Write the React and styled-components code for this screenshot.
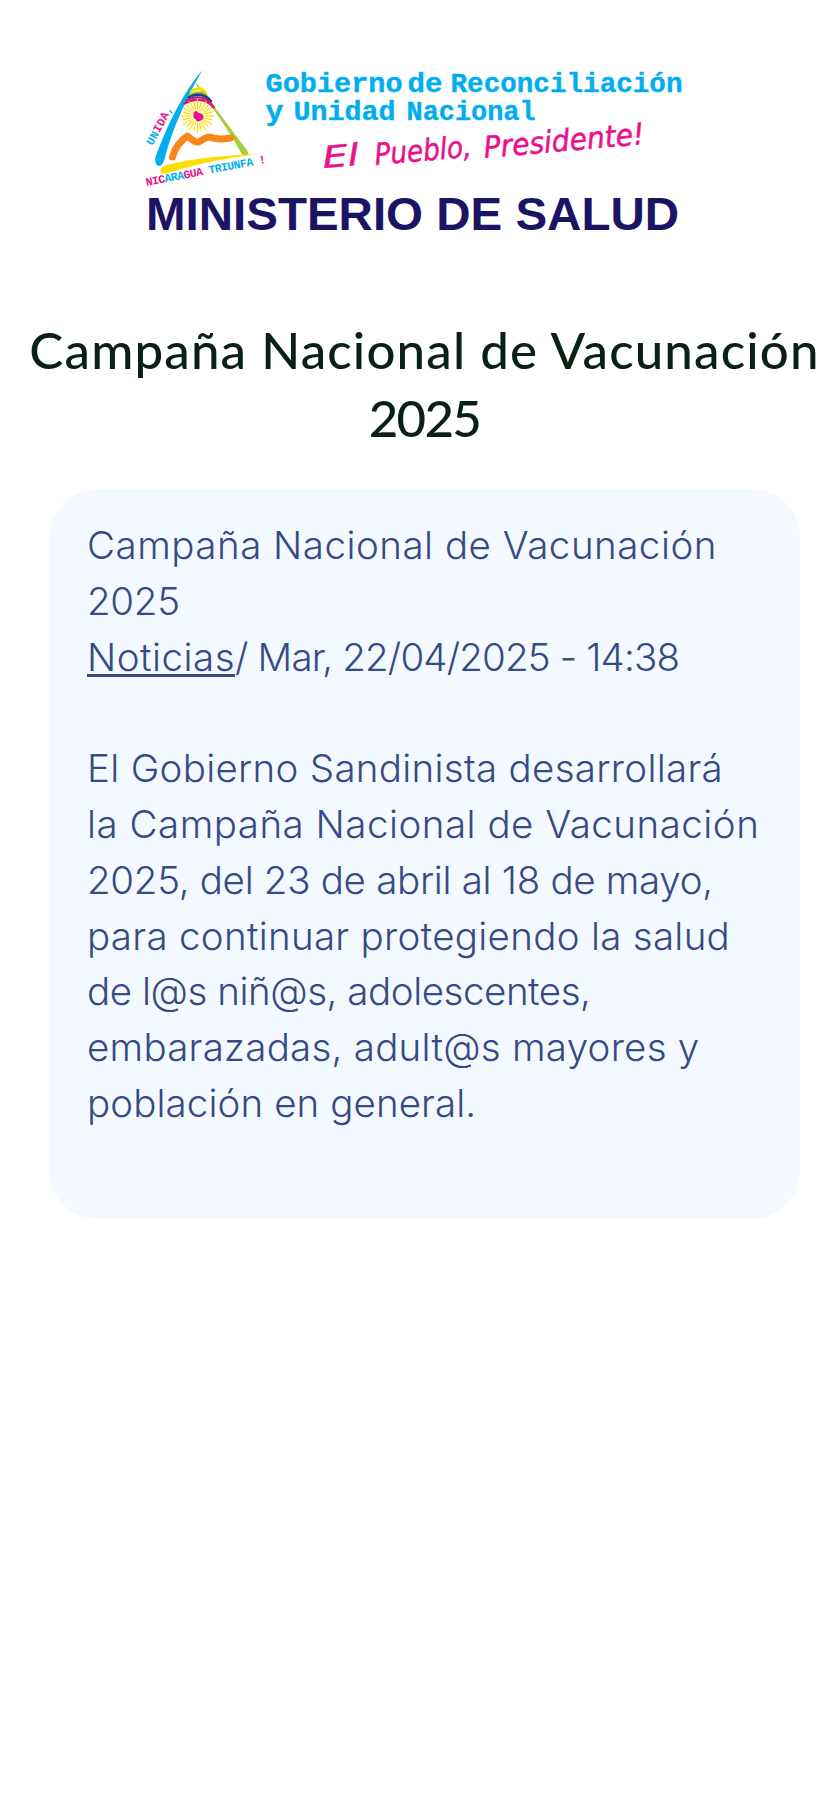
import styled, { createGlobalStyle } from 'styled-components'

const GlobalStyle = createGlobalStyle`
  html, body {
    margin: 0;
    background: #fff;
  }
`

const Page = styled.div`
  width: 838px;
  min-height: 1813px;
  box-sizing: border-box;
  padding: 60px 0 0 11px;
  display: flex;
  flex-direction: column;
  align-items: center;
  font-family: Inter, "Noto Sans", sans-serif;
`

const Logo = styled.svg`
  display: block;
  width: 560px;
  height: 190px;
`

const Title = styled.h1`
  margin: 66px 0 0;
  width: 100%;
  text-align: center;
  white-space: nowrap;
  font-family: Lato, sans-serif;
  font-weight: 500;
  font-size: 51px;
  line-height: 68px;
  letter-spacing: 1.15px;
  color: #0a2014;
`

const Year = styled.span`
  letter-spacing: -1.7px;
`

const Card = styled.article`
  margin-top: 37px;
  width: 751px;
  height: 730px;
  box-sizing: border-box;
  padding: 29px 38px;
  background: #f4f9ff;
  border-radius: 48px;
  font-size: 38.5px;
  font-weight: 300;
  line-height: 55.8px;
  color: #344b85;
`

const Line = styled.div`
  white-space: nowrap;
  letter-spacing: ${(p) => p.$ls ?? 0.5}px;
  margin-bottom: ${(p) => (p.$gap ? '55.8px' : '0')};
`

const NewsLink = styled.a`
  color: inherit;
  letter-spacing: 0.5px;
  text-decoration: underline;
  text-decoration-thickness: 3px;
  text-underline-offset: 3px;
`

const GovText = styled.text`
  font-family: "Liberation Mono", monospace;
  font-weight: 700;
  font-size: 28px;
  fill: #00aeef;
  stroke: #00aeef;
  stroke-width: 0.4px;
`

const Script = styled.text`
  font-family: "DejaVu Sans", sans-serif;
  font-style: oblique;
  font-size: 30px;
  fill: #ec0f8c;
  stroke: #ec0f8c;
  stroke-width: 0.5px;
`

const Motto = styled.text`
  font-family: "Liberation Mono", monospace;
  font-weight: 700;
  font-size: ${(p) => p.$size}px;
`

const Ministry = styled.text`
  font-family: "Liberation Sans", sans-serif;
  font-weight: 700;
  font-size: 47px;
  fill: #1b1464;
`

const sunRays = Array.from({ length: 24 }, (_, i) => {
  const a = (i * Math.PI) / 12
  const r = i % 2 ? 15 : 17
  return {
    x1: 197 + Math.cos(a) * 7,
    y1: 116 + Math.sin(a) * 7,
    x2: 197 + Math.cos(a) * r,
    y2: 116 + Math.sin(a) * r,
  }
})

const LogoMark = () => (
  <Logo viewBox="144.5 60 560 190">
    <path d="M202 70C183 92 168 122 155 157c-1 6 1 9 4 9 3-1 4-4 5-7C172 128 186 98 202 70Z" fill="#00aeef" />
    <path d="M196 84 246 151c2 3 1 4-1 4-2 0-3-1-4-3C228 128 212 106 196 84Z" fill="#a6ce39" stroke="#a6ce39" strokeWidth="1.5" />
    <path d="M160 172c0-4 3-6 6-7 30-7 62-10 92-11-30 4-60 9-90 19-4 1-7 1-8-1Z" fill="#ffdd00" />
    <path d="M190 92q11-8 16 3" fill="none" stroke="#ffdd00" strokeWidth="3" />
    <path d="M188 96q13-8 21 3" fill="none" stroke="#7ac143" strokeWidth="2" />
    <path d="M187 98q15-8 24 4" fill="none" stroke="#2e3192" strokeWidth="2.5" />
    <path d="M185 101q17-9 27 4" fill="none" stroke="#92278f" strokeWidth="2" />
    <path d="M183 104q19-10 31 4" fill="none" stroke="#ed145b" strokeWidth="2.5" />
    {sunRays.map((r, i) => (
      <line key={i} {...r} stroke="#ffdd00" strokeWidth="1.2" />
    ))}
    <circle cx="197" cy="116" r="7" fill="#fff6a0" />
    <path d="M193 113c2-3 4-2 5 0 2 0 5 1 5 4 0 3-4 4-6 5-1-2-2-3-4-4Z" fill="#ec0f8c" />
    <path
      d="M172 157C174 148 181 140 187 136 190 138 194 143 198 142 202 140 205 137 209 137 214 139 220 140 230 138"
      fill="none"
      stroke="#f7861c"
      strokeWidth="7"
      strokeLinecap="round"
      strokeLinejoin="round"
    />
    <Motto $size={11.5} transform="translate(152 146) rotate(-62)" textLength="43">
      <tspan fill="#00aeef">UN</tspan>
      <tspan fill="#ec0f8c">IDA</tspan>
      <tspan fill="#00aeef">,</tspan>
    </Motto>
    <Motto $size={11.5} transform="translate(146 186) rotate(-11)" textLength="122">
      <tspan fill="#ec0f8c">NIC</tspan>
      <tspan fill="#00aeef">ARA</tspan>
      <tspan fill="#ec0f8c">GUA</tspan>
      <tspan fill="#00aeef"> TRIUNFA</tspan>
      <tspan fill="#ec0f8c"> !</tspan>
    </Motto>
    <GovText x="265" y="92" textLength="137" lengthAdjust="spacingAndGlyphs">Gobierno</GovText>
    <GovText x="407" y="92" textLength="35" lengthAdjust="spacingAndGlyphs">de</GovText>
    <GovText x="450" y="92" textLength="232" lengthAdjust="spacingAndGlyphs">Reconciliación</GovText>
    <GovText x="265" y="120" textLength="18" lengthAdjust="spacingAndGlyphs">y</GovText>
    <GovText x="293" y="120" textLength="102" lengthAdjust="spacingAndGlyphs">Unidad</GovText>
    <GovText x="406" y="120" textLength="129" lengthAdjust="spacingAndGlyphs">Nacional</GovText>
    <Script transform="translate(323 168) rotate(-5)" textLength="36" lengthAdjust="spacingAndGlyphs">El</Script>
    <Script transform="translate(375 165) rotate(-5)" textLength="97" lengthAdjust="spacingAndGlyphs">Pueblo,</Script>
    <Script transform="translate(484 158) rotate(-5)" textLength="161" lengthAdjust="spacingAndGlyphs">Presidente!</Script>
    <Ministry x="145.5" y="230" textLength="533" lengthAdjust="spacingAndGlyphs">MINISTERIO DE SALUD</Ministry>
  </Logo>
)

const App = () => (
  <Page>
    <GlobalStyle />
    <LogoMark />
    <Title>
      Campaña Nacional de Vacunación
      <br />
      <Year>2025</Year>
    </Title>
    <Card>
      <Line>Campaña Nacional de Vacunación</Line>
      <Line $ls={-0.3}>2025</Line>
      <Line $gap $ls={-0.85}>
        <NewsLink href="#">Noticias</NewsLink>/ Mar, 22/04/2025 - 14:38
      </Line>
      <Line $ls={0.3}>El Gobierno Sandinista desarrollará</Line>
      <Line>la Campaña Nacional de Vacunación</Line>
      <Line $ls={-0.3}>2025, del 23 de abril al 18 de mayo,</Line>
      <Line $ls={0.3}>para continuar protegiendo la salud</Line>
      <Line $ls={-0.45}>de l@s niñ@s, adolescentes,</Line>
      <Line $ls={0.25}>embarazadas, adult@s mayores y</Line>
      <Line $ls={0.1}>población en general.</Line>
    </Card>
  </Page>
)

export default App
